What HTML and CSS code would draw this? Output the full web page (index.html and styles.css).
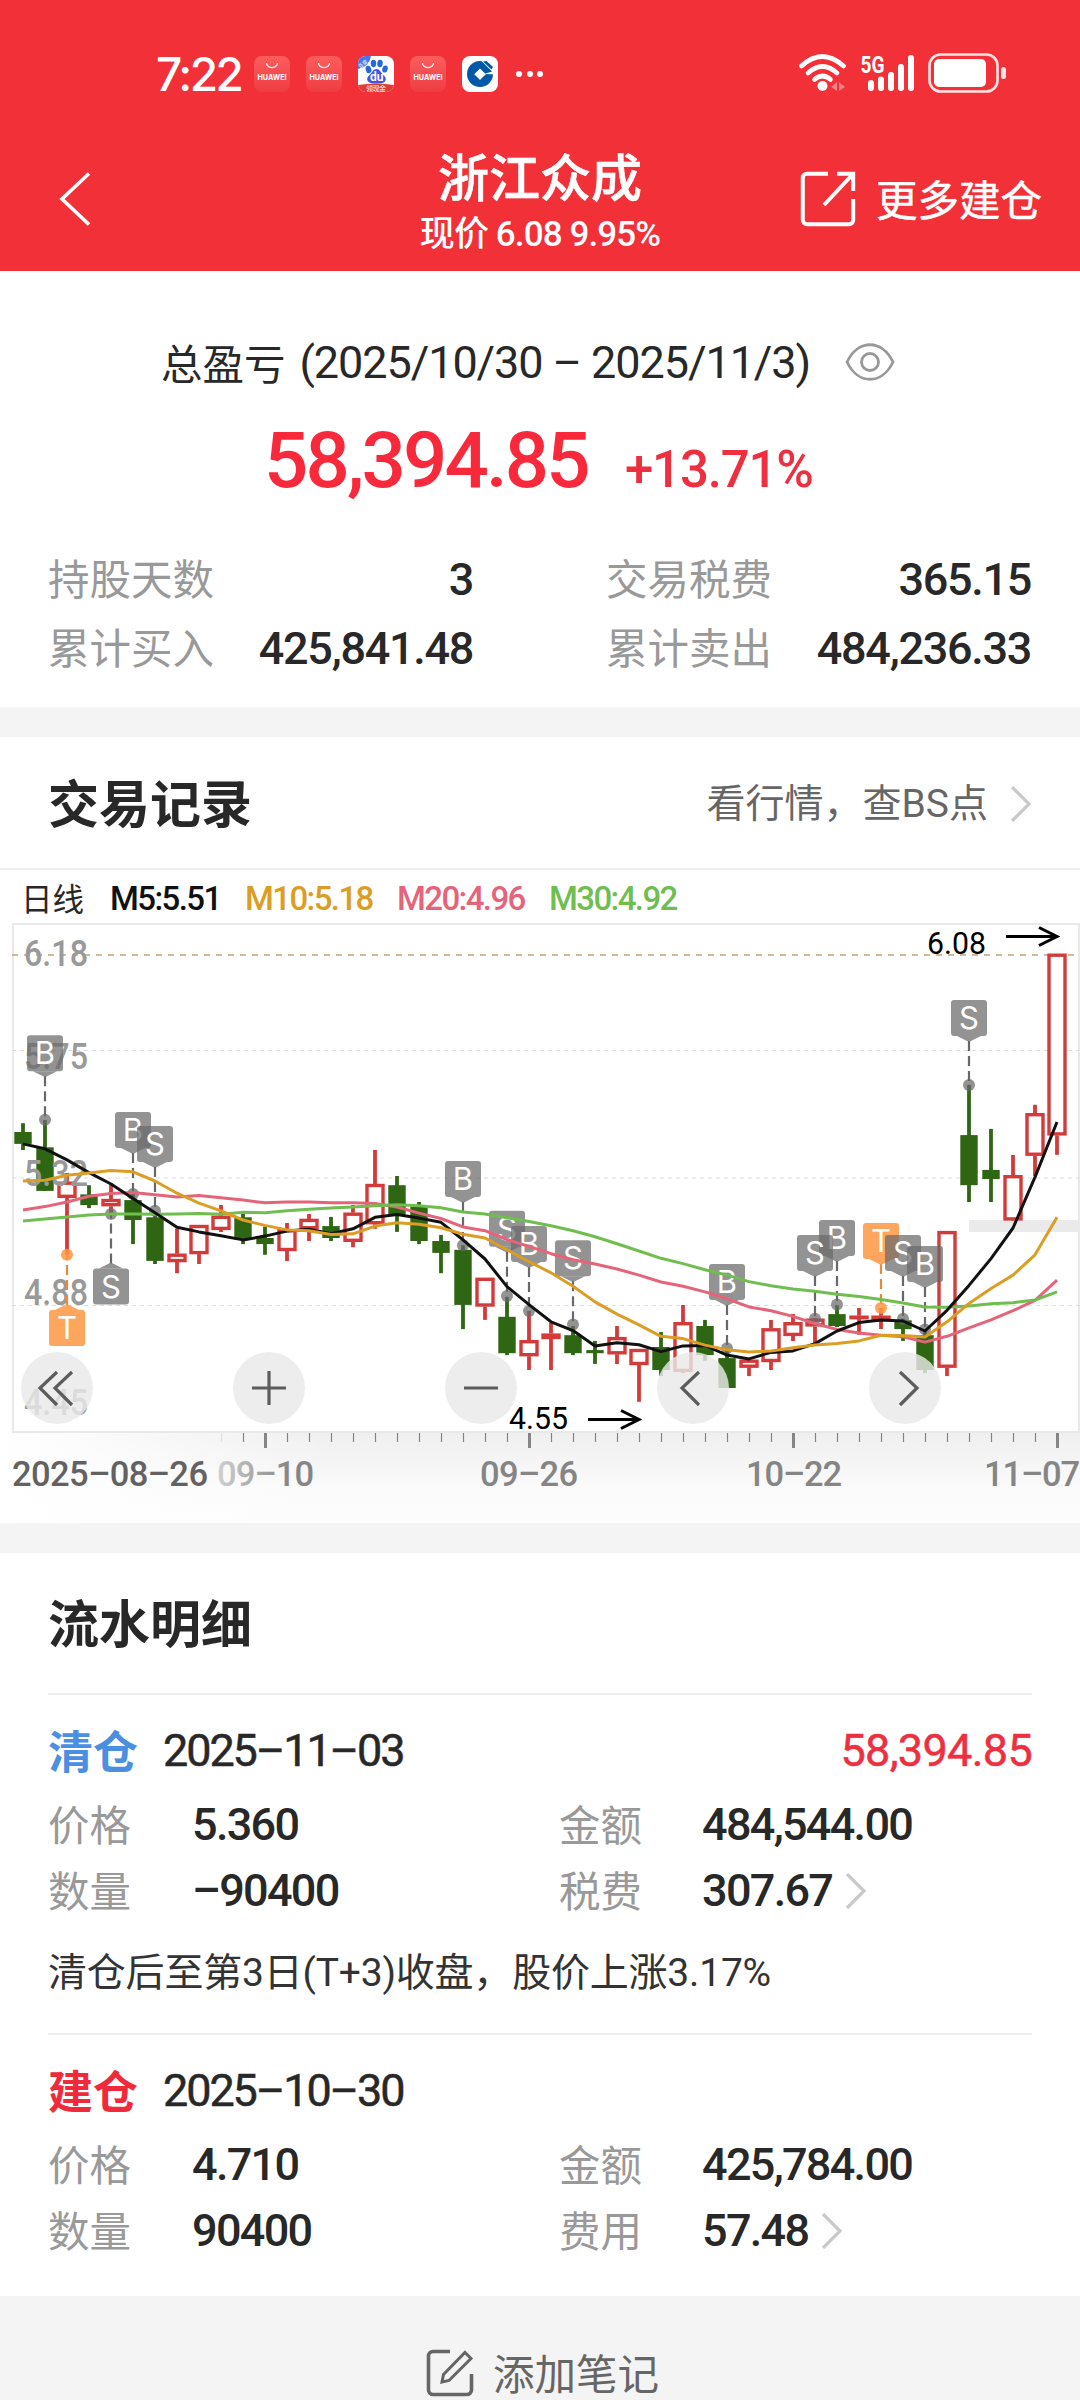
FILE: index.html
```html
<!DOCTYPE html>
<html lang="zh-CN">
<head>
<meta charset="utf-8">
<title>浙江众成</title>
<link rel="stylesheet" href="styles.css">
</head>
<body>
<header class="header">
  <div class="status">
    <div class="status-left">
      <span class="clock">7:22</span>
      <span class="app huawei"><svg width="36" height="36" viewBox="0 0 36 36"><path d="M12.500 7a5.500 4.600 0 0 0 11 0" fill="none" stroke="#fff" stroke-width="1.200"/><text x="3.500" y="23.500" textLength="29" lengthAdjust="spacingAndGlyphs">HUAWEI</text></svg></span>
      <span class="app huawei"><svg width="36" height="36" viewBox="0 0 36 36"><path d="M12.500 7a5.500 4.600 0 0 0 11 0" fill="none" stroke="#fff" stroke-width="1.200"/><text x="3.500" y="23.500" textLength="29" lengthAdjust="spacingAndGlyphs">HUAWEI</text></svg></span>
      <span class="app baidu"><svg width="36" height="36" viewBox="0 0 36 36"><path d="M0 0h13Q11 11 0 13z" fill="#4676ee"/><text x="-1" y="10" font-size="5" fill="#fff" transform="rotate(-40 4 7)">百度</text><g fill="#2668dc"><ellipse cx="10.500" cy="13.500" rx="2.800" ry="3.800" transform="rotate(-15 10.500 13.500)"/><ellipse cx="15.500" cy="7.500" rx="2.700" ry="3.700"/><ellipse cx="22" cy="7.500" rx="2.700" ry="3.700" transform="rotate(8 22 7.500)"/><ellipse cx="27" cy="13" rx="2.700" ry="3.600" transform="rotate(15 27 13)"/></g><path d="M18.500 13c3 0 4 3 6 5s4 4 3 6.500-4 3-9 3-8-.5-9-3 1-4.500 3-6.500 3-5 6-5z" fill="#4352e8"/><text x="12" y="25" font-size="12" font-weight="700" fill="#fff">du</text><path d="M0 29q18-3 36 0v7H0z" fill="#e23a35"/><text x="8" y="35" font-size="7" fill="#fff" textLength="20">领现金</text></svg></span>
      <span class="app huawei"><svg width="36" height="36" viewBox="0 0 36 36"><path d="M12.500 7a5.500 4.600 0 0 0 11 0" fill="none" stroke="#fff" stroke-width="1.200"/><text x="3.500" y="23.500" textLength="29" lengthAdjust="spacingAndGlyphs">HUAWEI</text></svg></span>
      <span class="app bank"><svg width="36" height="36" viewBox="0 0 36 36"><circle cx="18" cy="18" r="13" fill="#0058a8"/><path d="M18 12.500l5.800 5.800-5.800 5.800-5.800-5.800z" fill="#fff"/><path d="M22 18l13-4v4.500z" fill="#fff"/><path d="M18 3.500l3-1 12 12-2 2z" fill="#fff"/><path d="M21 5.500l3.500-.5 6.500 6-1.500 2.500zM19.500 7.500l9 8h-3.500z" fill="#0058a8"/></svg></span>
      <span class="dots"><i></i><i></i><i></i></span>
    </div>
    <svg class="status-right" width="210" height="44" viewBox="798 51 210 44">
      <g fill="none" stroke="#fff" stroke-width="4.600" stroke-linecap="round"><path d="M801.500 66q20.500-19 42 0"/><path d="M808 73q14.500-13 29 0"/><path d="M814.500 79.500q8-7 16 0"/></g>
      <circle cx="822.500" cy="86" r="5" fill="#fff"/><path d="M831 87l6-5v9zM845 87l-6-5v9z" fill="#f98087"/>
      <text x="860.500" y="73" class="net" textLength="24" lengthAdjust="spacingAndGlyphs">5G</text>
      <g stroke="#fff" stroke-width="6" stroke-linecap="round"><path d="M871 83v5M881 79.500v8.500M891 75v13M901 67v21M911 58v30"/></g>
      <rect x="929.500" y="54.500" width="68" height="37" rx="11" fill="none" stroke="#ffe3e4" stroke-width="2.600"/>
      <rect x="934" y="59" width="52" height="28" rx="5" fill="#fff"/><rect x="1001" y="67" width="5" height="12" rx="2.500" fill="#ffe3e4"/>
    </svg>
  </div>
  <nav class="nav">
    <svg class="back" width="32" height="54" viewBox="0 0 32 54"><path d="M30 1.500L3 27l27 25.500" fill="none" stroke="#fff" stroke-width="3.600"/></svg>
    <div class="nav-title"><h1>浙江众成</h1><p>现价 6.08 9.95%</p></div>
    <a class="more"><svg width="56" height="56" viewBox="0 0 56 56" fill="none" stroke="#fff" stroke-width="4"><path d="M28 2.800H7a4.200 4.200 0 0 0-4.200 4.200v42A4.200 4.200 0 0 0 7 53.200h42a4.200 4.200 0 0 0 4.200-4.200V28M37 2.800h16.200V20M53 3L24 34"/></svg><span>更多建仓</span></a>
  </nav>
</header>

<section class="summary">
  <div class="range"><span>总盈亏</span><span class="range-dates">(2025/10/30 – 2025/11/3)</span><svg width="50" height="38" viewBox="0 0 50 38" fill="none" stroke="#999" stroke-width="2.800"><path d="M2 19C13-4 37-4 48 19 37 42 13 42 2 19z"/><circle cx="25" cy="19" r="8.500"/></svg></div>
  <div class="profit"><strong>58,394.85</strong><span>+13.71%</span></div>
  <dl class="stats">
    <div><dt>持股天数</dt><dd>3</dd></div><div><dt>交易税费</dt><dd>365.15</dd></div>
    <div><dt>累计买入</dt><dd>425,841.48</dd></div><div><dt>累计卖出</dt><dd>484,236.33</dd></div>
  </dl>
</section>

<section class="records">
  <div class="records-head"><h2>交易记录</h2><a>看行情，查BS点<svg class="chev" width="22" height="36" viewBox="0 0 22 36"><path d="M2 1l17 17L2 35"/></svg></a></div>
  <div class="legend"><span class="day">日线</span><span class="m5">M5:5.51</span><span class="m10">M10:5.18</span><span class="m20">M20:4.96</span><span class="m30">M30:4.92</span></div>
  <svg class="chart" id="chart" width="1080" height="603" viewBox="0 0 1080 603"></svg>
</section>

<section class="ledger">
  <h2>流水明细</h2>
  <article class="entry">
    <div class="entry-head"><b class="close">清仓</b><time>2025–11–03</time><span class="gain">58,394.85</span></div>
    <dl class="fields"><dt>价格</dt><dd>5.360</dd><dt>金额</dt><dd>484,544.00</dd><dt>数量</dt><dd>–90400</dd><dt>税费</dt><dd>307.67<svg class="chev" width="22" height="36" viewBox="0 0 22 36"><path d="M2 1l17 17L2 35"/></svg></dd></dl>
    <p class="note">清仓后至第3日(T+3)收盘，股价上涨3.17%</p>
  </article>
  <article class="entry">
    <div class="entry-head"><b class="open">建仓</b><time>2025–10–30</time></div>
    <dl class="fields"><dt>价格</dt><dd>4.710</dd><dt>金额</dt><dd>425,784.00</dd><dt>数量</dt><dd>90400</dd><dt>费用</dt><dd>57.48<svg class="chev" width="22" height="36" viewBox="0 0 22 36"><path d="M2 1l17 17L2 35"/></svg></dd></dl>
  </article>
</section>

<footer class="add-note"><svg width="48" height="48" viewBox="0 0 48 48" fill="none" stroke="#666" stroke-width="3.600"><path d="M24 2.500H7A4.500 4.500 0 0 0 2.500 7v34A4.500 4.500 0 0 0 7 45.500h34a4.500 4.500 0 0 0 4.500-4.500V25"/><path d="M39 3.500l6 6-22 22-7 1.500 1.500-7.500z" stroke-width="3"/></svg><span>添加笔记</span></footer>
<script src="chart.js"></script>
</body>
</html>
```

FILE: styles.css
```css
* { box-sizing: border-box; }
body, h1, h2, p, dl, dd, dt { margin: 0; }
body {
  width: 1080px;
  height: 2400px;
  overflow: hidden;
  background: #f4f4f4;
  color: #282828;
  font-family: Roboto, "Noto Sans CJK SC", sans-serif;
}
svg { display: block; flex: none; }

.header { height: 271px; background: #f13038; color: #fff; }
.status { height: 147px; padding: 51px 72px 0 156px; display: flex; justify-content: space-between; }
.status-left { display: flex; align-items: center; height: 46px; }
.clock { width: 98px; font: 500 46px/46px Inter, sans-serif; letter-spacing: -2.5px; }
.app { width: 36px; height: 36px; margin-right: 16px; border-radius: 8px; overflow: hidden; background: #fff; }
.huawei { background: linear-gradient(#fd5d5e, #ee3d43); }
.huawei text { font: 700 7.500px Inter, sans-serif; fill: #fff; }
.dots { display: flex; gap: 4.500px; padding-left: 2px; }
.dots i { width: 6px; height: 6px; border-radius: 50%; background: #fff; }
.net { font: 700 23px Roboto, sans-serif; fill: #fff; }
.nav { height: 124px; display: grid; grid-template-columns: 300px 480px 300px; }
.back { margin: 25px 0 0 59px; }
.nav-title { text-align: center; }
.nav-title h1 { margin-top: -2px; font: 500 51px/60px "Noto Sans CJK SC", sans-serif; -webkit-text-stroke: .6px currentColor; }
.nav-title p { font-size: 35px; line-height: 60px; font-weight: 500; letter-spacing: -.9px; }
.more { display: flex; align-items: center; height: 104px; padding-left: 20px; gap: 20px; font: 400 41.500px/60px "Noto Sans CJK SC", sans-serif; white-space: nowrap; }
.more span { padding-bottom: 3px; -webkit-text-stroke: .5px currentColor; }

.summary { height: 436px; background: #fff; padding: 61px 48px 0; }
.range { display: flex; align-items: center; height: 60px; padding-left: 113px; font-size: 41.500px; }
.range-dates { margin-left: 14px; font-size: 45px; letter-spacing: -1.080px; width: 545px; white-space: pre; }
.profit { height: 130px; margin-top: 4px; padding-left: 216px; display: flex; align-items: baseline; color: #f9293c; font-weight: 500; line-height: 130px; }
.profit strong { font-size: 78px; font-weight: 500; letter-spacing: -2.850px; width: 361px; }
.profit span { font-size: 51px; letter-spacing: -1.200px; color: #ee2f3f; }
.stats { margin-top: 19px; display: grid; grid-template-columns: 426px 426px; justify-content: space-between; grid-auto-rows: 69px; }
.stats div { display: flex; justify-content: space-between; align-items: center; }
dt { padding-bottom: 5px; color: #999; font: 400 41.500px/60px "Noto Sans CJK SC", sans-serif; }
dd { font-size: 45px; line-height: 60px; font-weight: 500; letter-spacing: -1.300px; }
.stats dd { padding-right: 1px; }

.records { margin-top: 30px; height: 786px; background: #fff; display: flex; flex-direction: column; }
.records-head { height: 133px; padding: 0 48px; display: flex; align-items: center; justify-content: space-between; border-bottom: 2px solid #eee; }
h2 { font: 700 51px/72px "Noto Sans CJK SC", sans-serif; }
.records-head h2 { padding-bottom: 3px; }
.records-head a { display: flex; align-items: center; gap: 22px; font: 400 39px/56px Roboto, "Noto Sans CJK SC", sans-serif; color: #666; padding-top: 2px; }
.chev { fill: none; stroke: #c9c9c9; stroke-width: 3.200; }
.legend { height: 50px; padding: 6px 0 0 21px; display: flex; align-items: center; font-size: 33px; font-weight: 500; letter-spacing: -1.600px; white-space: nowrap; }
.legend span { width: 152px; }
.legend .day { width: 89px; font-size: 31.500px; font-weight: 400; letter-spacing: 0; padding-bottom: 2px; }
.legend .m5 { width: 135px; color: #111; }
.m10 { color: #dc9d24; }
.m20 { color: #e5647a; }
.m30 { color: #70bd50; }
.axis-label { font: 500 36px Roboto, sans-serif; fill: #999; }
.date-label { font: 500 34.500px Roboto, sans-serif; fill: #858585; }
.extreme { font: 400 31px Roboto, sans-serif; fill: #000; }
.marker-text { font: 400 31px Inter, sans-serif; fill: #fff; text-anchor: middle; }

.ledger { margin-top: 30px; height: 743px; padding: 32px 48px 0; background: #fff; }
.ledger h2 { height: 108px; }
.entry { height: 340px; padding-top: 25px; border-top: 2px solid #eee; }
.entry-head { height: 60px; display: flex; align-items: center; font-size: 45px; letter-spacing: -2.100px; }
.entry-head b { width: 115px; font: 700 45px/60px "Noto Sans CJK SC", sans-serif; letter-spacing: 0; }
.entry-head time { font-weight: 400; -webkit-text-stroke: .5px currentColor; }
.close { color: #4b8fe2; }
.open { color: #f0293b; }
.gain { margin-left: auto; color: #ee2f3f; letter-spacing: -.700px; -webkit-text-stroke: .5px currentColor; }
.fields { margin-top: 12px; display: grid; grid-template-columns: 144px 367px 143px 300px; grid-auto-rows: 66px; align-items: center; }
.fields dd { display: flex; align-items: center; gap: 13px; letter-spacing: -1.700px; }
.note { margin-top: 21px; font-size: 39px; line-height: 56px; color: #333; letter-spacing: -.200px; }
.add-note { height: 104px; padding: 50px 0 0 426px; display: flex; align-items: center; gap: 19px; color: #666; font: 400 41.500px/54px "Noto Sans CJK SC", sans-serif; }
.add-note span { padding-bottom: 3px; }
```

FILE: chart.js
```js
// Candles: [colour, high, body top, body bottom, low], one per trading day.
const candles = [
  ['g',531,554,585,601],['g',523,594,708,708],['r',661,684,726,875],['g',693,717,745,753],['r',688,729,748,768],
  ['g',716,732,784,847],['g',765,777,891,899],['r',806,872,894,923],['r',797,797,873,899],['r',745,773,810,815],
  ['g',761,777,836,847],['g',801,831,847,875],['r',792,808,865,891],['r',768,781,808,839],['g',776,800,831,839],
  ['r',745,765,841,855],['r',601,690,795,807],['g',669,693,770,815],['g',737,750,839,847],['g',823,839,870,923],
  ['g',850,862,1006,1069],['r',935,935,1010,1045],['g',985,1037,1132,1137],['r',1022,1098,1140,1176],['r',1053,1081,1095,1176],
  ['g',1061,1085,1132,1137],['g',1100,1124,1132,1160],['r',1061,1090,1135,1160],['r',1121,1121,1163,1259],['g',1077,1116,1176,1192],
  ['r',1006,1051,1181,1184],['g',1045,1061,1137,1152],['g',1125,1145,1223,1223],['r',1149,1149,1170,1192],['r',1045,1067,1155,1176],
  ['r',1030,1051,1087,1100],['r',1040,1042,1062,1112],['g',1007,1030,1061,1064],['r',1014,1034,1042,1084],['r',1014,1034,1048,1069],
  ['g',1042,1046,1069,1100],['g',1075,1085,1176,1184],['r',813,813,1170,1192],['g',431,562,693,737],['g',546,653,677,737],
  ['r',614,667,785,787],['r',483,505,616,669],['r',88,88,563,614]
];
const averages = {
  '#e5647a': [758,749,737,722,715,712,718,724,720,726,732,739,737,737,739,739,741,750,766,780,802,812,835,853,872,888,899,912,928,946,957,972,990,1011,1021,1036,1055,1070,1079,1085,1089,1103,1088,1066,1045,1021,994,941],
  '#70bd50': [787,781,776,771,768,768,769,768,767,769,764,765,760,756,753,750,747,744,747,752,763,768,778,788,799,812,828,846,865,884,898,914,928,945,956,964,970,978,984,992,1001,1011,1012,1009,1003,1000,993,972],
  '#111': [585,598,627,660,690,728,765,803,815,825,836,826,813,808,820,807,777,770,779,790,836,886,958,1005,1050,1073,1113,1105,1110,1128,1113,1112,1137,1147,1130,1126,1107,1074,1052,1045,1048,1074,1020,955,885,805,672,528],
  '#dc9d24': [682,680,667,661,655,658,682,714,740,760,784,798,810,812,822,820,800,791,795,804,821,831,862,893,922,957,998,1030,1058,1088,1094,1111,1123,1129,1126,1118,1111,1107,1100,1085,1086,1090,1050,1002,963,928,875,777]
};
// Trade markers: [letter, day index, label top, anchor point].
const markers = [
  ['B',1,301,522],['T',2,1019,875],['S',4,911,768],['B',5,502,716],['S',6,538,760],['B',20,630,850],['S',22,760,983],['B',23,800,1022],
  ['S',25,837,1057],['B',32,899,1119],['B',37,784,1005],['S',36,823,1042],['T',39,792,1014],['S',40,823,1042],['B',41,852,1070],['S',43,209,431]
];
const X = i => 23 + 22 * i;
const Y = v => +(v * 600 / 1568).toFixed(1);
let s = '';

s += `<defs>
<linearGradient id="axis" x1="0" y1="0" x2="0" y2="1"><stop offset="0" stop-color="#efefef"/><stop offset=".6" stop-color="#fafafa"/><stop offset="1" stop-color="#fdfdfd"/></linearGradient>
<linearGradient id="fade"><stop offset="0" stop-color="#fff"/><stop offset="1" stop-color="#fff" stop-opacity="0"/></linearGradient>
<linearGradient id="dim" gradientUnits="userSpaceOnUse" x1="205" y1="0" x2="290" y2="0"><stop offset="0" stop-color="#ddd"/><stop offset="1" stop-color="#858585"/></linearGradient></defs>
<rect x="0" y="511" width="1080" height="92" fill="url(#axis)"/><rect x="0" y="511" width="330" height="92" fill="url(#fade)"/>
<rect x="13" y="4" width="1066" height="508" fill="#fff" stroke="#e9e9e9" stroke-width="2"/>
<path d="M12 35H1075" stroke="#bda678" stroke-width="1.700" stroke-dasharray="6 6"/>
<path d="M12 130.500H1080M12 258H1080M12 385.500H1080" stroke="#dcdcdc" stroke-width="1.200" stroke-dasharray="4 4"/>
<rect x="969" y="300" width="111" height="12" fill="#eaeaea"/>`;

candles.forEach(([c, hi, top, bot, lo], i) => {
  const x = X(i);
  if (c === 'g') {
    s += `<path d="M${x} ${Y(hi)}V${Y(lo)}" stroke="#2f6613" stroke-width="3.800"/><rect x="${x - 8.7}" y="${Y(top)}" width="17.400" height="${Y(bot) - Y(top)}" fill="#2f6613"/>`;
  } else {
    const h = Math.max(Y(bot) - Y(top) - 3, .5);
    s += `<path d="M${x} ${Y(hi)}V${Y(top)}M${x} ${Y(bot)}V${Y(lo)}" stroke="#d33b3b" stroke-width="3.800"/><rect x="${x - 8}" y="${Y(top) + 1.5}" width="16" height="${h}" fill="#fff" stroke="#d33b3b" stroke-width="3.400"/>`;
  }
});

[['6.18',121],['5.75',388],['5.32',696],['4.88',1007],['4.45',1294]].forEach(([t, v]) => {
  s += `<text class="axis-label" x="24" y="${Y(v)}" textLength="64" lengthAdjust="spacingAndGlyphs">${t}</text>`;
});

markers.forEach(([t, i, top, dot]) => {
  const x = X(i), y = Y(top), d = Y(dot), trade = t === 'T';
  const fill = trade ? 'rgba(255,150,66,.85)' : 'rgba(105,105,105,.72)';
  const down = dot > top;
  const tip = down ? `M${x - 12} ${y + 36}L${x} ${y + 42}L${x + 12} ${y + 36}z` : `M${x - 12} ${y}L${x} ${y - 6}L${x + 12} ${y}z`;
  s += `<path d="M${x} ${down ? y + 41 : y - 5}V${d}" stroke="${trade ? '#e58a42' : '#686868'}" stroke-width="2.200" stroke-dasharray="10 5"/>
<circle cx="${x}" cy="${d}" r="6" fill="${fill}"/><rect x="${x - 18}" y="${y}" width="36" height="36" rx="3" fill="${fill}"/><path d="${tip}" fill="${fill}"/>
<text class="marker-text" x="${x}" y="${y + 29}">${t}</text>`;
});

for (const [color, values] of Object.entries(averages)) {
  s += `<polyline points="${values.map((v, i) => X(i) + ',' + Y(v)).join(' ')}" fill="none" stroke="${color}" stroke-width="3" stroke-linejoin="round"/>`;
}

s += '<g fill="rgba(233,233,233,.82)">' + [57, 269, 481, 693, 905].map(x => `<circle cx="${x}" cy="468" r="36"/>`).join('') + '</g>';
s += `<path d="M57 452L40 468l17 17M72 452L55 468l17 17M252 468h34M269 451v34M464 468h34M699 452l-17 16 17 17M900 452l17 16-17 17" fill="none" stroke="#5c5c5c" stroke-width="3.200"/>
<g fill="none" stroke="#000" stroke-width="3"><path d="M1006 16.500h51M1039 7.500l18 9-18 9M588 499.500h51M621 490.500l18 9-18 9"/></g>
<text class="extreme" x="927" y="34" textLength="59" lengthAdjust="spacingAndGlyphs">6.08</text><text class="extreme" x="509" y="509" textLength="59" lengthAdjust="spacingAndGlyphs">4.55</text>`;

for (let i = 9; i < 48; i++) {
  const major = i % 12 === 11;
  s += `<path d="M${X(i) + .5} 513V${major ? 528 : 522}" stroke="${i === 9 ? '#ddd' : '#858585'}" stroke-width="${major ? 3 : 1.2}"/>`;
}
[['2025–08–26',12,196],['09–10',217,97],['09–26',480,98],['10–22',746,96],['11–07',984,96]].forEach(([t, x, w], i) => {
  const style = i === 0 ? 'style="fill:#626262"' : i === 1 ? 'style="fill:url(#dim)"' : '';
  s += `<text class="date-label" x="${x}" y="565.500" textLength="${w}" ${style}>${t}</text>`;
});
document.getElementById('chart').innerHTML = s;
```
